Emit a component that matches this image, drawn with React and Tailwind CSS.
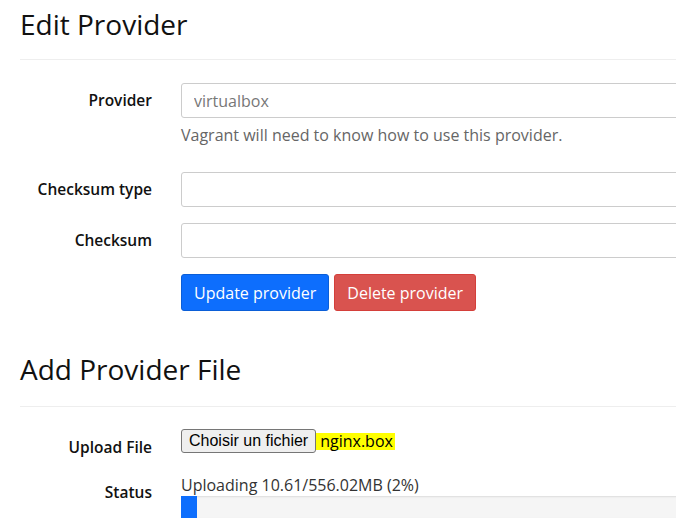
import React from "react";

function Row({ label, children, labelClass = "" }) {
  return (
    <div className="flex items-start">
      <div className={`w-[132px] shrink-0 text-right font-semibold text-[15.5px] text-[#111] ${labelClass}`}>
        {label}
      </div>
      <div className="ml-[29px] flex-1">{children}</div>
    </div>
  );
}

export default function App() {
  return (
    <div className="w-[676px] h-[525px] overflow-hidden bg-white">
      <div className="w-[1000px] pl-5 text-[#333]" style={{ fontFamily: '"Open Sans", sans-serif' }}>
        <h1 className="text-[28px] leading-[48px] font-normal text-[#111]">Edit Provider</h1>
        <hr className="mt-[11px] border-t border-[#eee]" />

        <div className="mt-[23px]">
          <Row label="Provider" labelClass="pt-[6px]">
            <input
              readOnly
              value="virtualbox"
              className="w-full h-[35px] px-3 border border-[#ccc] rounded-[3px] text-[16px] text-[#777] outline-none"
            />
            <p className="mt-[5px] text-[16px] text-[#666]">Vagrant will need to know how to use this provider.</p>
          </Row>
        </div>

        <div className="mt-[25px] space-y-[16px]">
          <Row label="Checksum type" labelClass="pt-[6px]">
            <input className="w-full h-[35px] px-3 border border-[#ccc] rounded-[3px] outline-none" />
          </Row>
          <Row label="Checksum" labelClass="pt-[6px]">
            <input className="w-full h-[35px] px-3 border border-[#ccc] rounded-[3px] outline-none" />
          </Row>
          <Row label="">
            <div className="flex gap-[5px]">
              <button className="h-[37px] px-[12px] bg-[#0d6efd] text-white text-[16px] rounded-[3px] border border-[#0b5ed7]">
                Update provider
              </button>
              <button className="h-[37px] px-[12px] bg-[#d9534f] text-white text-[16px] rounded-[3px] border border-[#d43f3a]">
                Delete provider
              </button>
            </div>
          </Row>
        </div>

        <h1 className="mt-[34px] text-[28px] leading-[48px] font-normal text-[#111]">Add Provider File</h1>
        <hr className="mt-[13px] border-t border-[#eee]" />

        <div className="mt-[22px] space-y-[15px]">
          <Row label="Upload File" labelClass="pt-[7px]">
            <div className="flex items-center" style={{ fontFamily: '"Liberation Sans", Arial, sans-serif' }}>
              <span className="relative z-10 h-[24px] px-[7px] leading-[22px] border border-[#767676] rounded-[3px] bg-[#efefef] text-[16px] text-black">
                Choisir un fichier
              </span>
              <span className="ml-[-4px] pl-[8px] pr-[2px] bg-[#ffff00] text-[16px] text-black leading-[17px]" style={{ fontFamily: '"Open Sans", sans-serif' }}>
                nginx.box
              </span>
            </div>
          </Row>
          <Row label="Status" labelClass="pt-[7px]">
            <div className="text-[16px] leading-[22px] text-[#333]">Uploading 10.61/556.02MB (2%)</div>
            <div className="h-[22px] bg-[#f5f5f5] shadow-[inset_0_1px_2px_rgba(0,0,0,0.1)]">
              <div className="h-full w-[16px] bg-[#0d6efd]" />
            </div>
          </Row>
        </div>
      </div>
    </div>
  );
}
